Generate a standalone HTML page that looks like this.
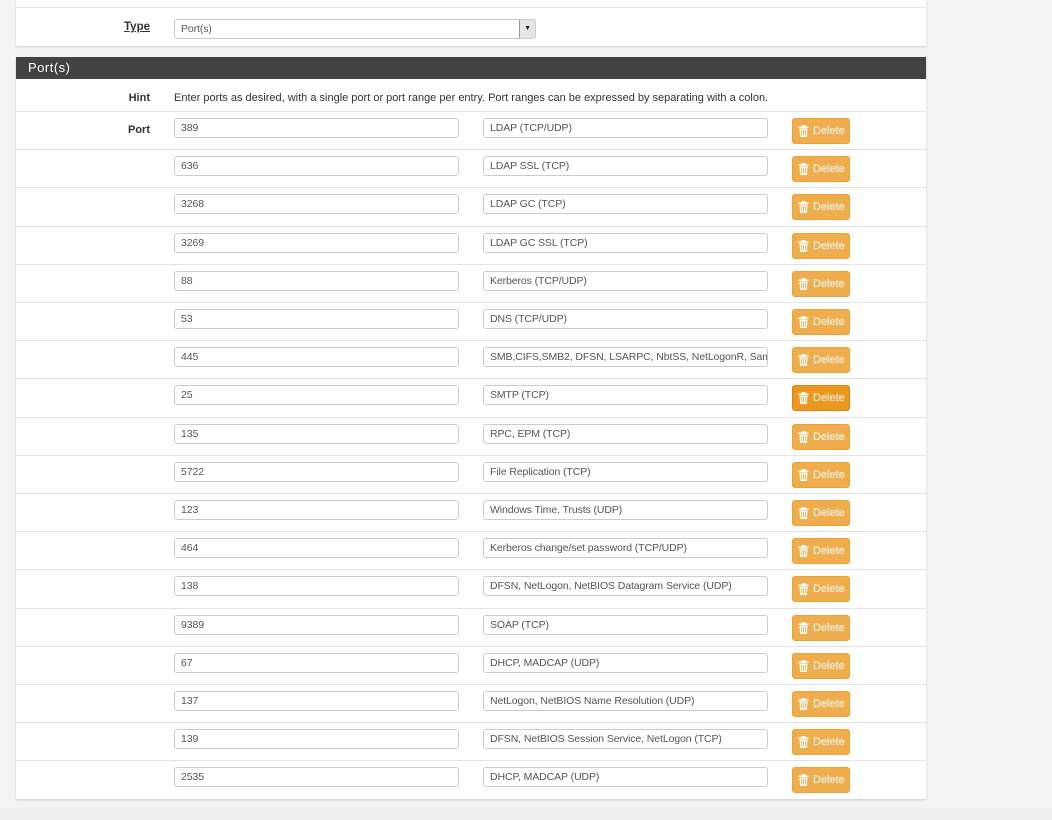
<!DOCTYPE html>
<html><head><style>
body{margin:0;width:1052px;height:820px;background:#f3f3f3;font-family:"Liberation Sans",sans-serif;position:relative;overflow:hidden}
.bot{position:absolute;left:0;top:808px;width:1052px;height:12px;background:#efefef}
.panel{position:absolute;left:16px;width:910px;background:#fff;box-shadow:0 1px 2px rgba(0,0,0,.15)}
.lbl{position:absolute;right:776px;font-size:11px;font-weight:bold;color:#333}
.in{position:absolute;border:1px solid #ccc;border-radius:3px;background:#fff;font-size:10.5px;color:#555;line-height:18px;padding-left:6px;box-sizing:border-box;height:20px;white-space:nowrap;overflow:hidden;letter-spacing:-.1px}
.btn{position:absolute;left:776px;width:58px;height:26px;background:#f0ad4e;border:1px solid #eea236;border-radius:3px;box-sizing:border-box;color:#fff;font-size:11px;line-height:24px}
.btn.a{background:#ec971f;border-color:#d58512}
.btn svg{position:absolute;left:5px;top:6px}
.btn span{position:absolute;left:20px}
.row{position:absolute;left:0;width:910px;border-top:1px solid #e3e3e3;height:38px}
</style></head><body>
<div class="panel" style="top:0;height:46px">
<div style="position:absolute;left:0;top:7px;width:910px;border-top:1px solid #e3e3e3"></div>
<div class="lbl" style="top:21px;text-decoration:underline;font-size:11.5px">Type</div>
<div class="in" style="left:158px;top:19px;width:362px;line-height:18px">Port(s)<div style="position:absolute;right:0;top:0;width:15px;height:18px;background:#e6e6e6;border-left:1px solid #999;font-size:7px;text-align:center;color:#222">▼</div></div>
</div>
<div class="panel" style="top:57px;height:742px">
<div style="height:22px;background:#424242;color:#fff;font-size:13px;line-height:22px;padding-left:12px;letter-spacing:.5px">Port(s)</div>
<div class="lbl" style="top:35px">Hint</div>
<div style="position:absolute;left:158px;top:35px;font-size:11px;color:#333">Enter ports as desired, with a single port or port range per entry. Port ranges can be expressed by separating with a colon.</div>
<div id="rows"></div>
</div>
<div class="bot"></div>
<script>
var d=[["389","LDAP (TCP/UDP)"],["636","LDAP SSL (TCP)"],["3268","LDAP GC (TCP)"],["3269","LDAP GC SSL (TCP)"],["88","Kerberos (TCP/UDP)"],["53","DNS (TCP/UDP)"],["445","SMB,CIFS,SMB2, DFSN, LSARPC, NbtSS, NetLogonR, SamR, SrvSvc"],["25","SMTP (TCP)"],["135","RPC, EPM (TCP)"],["5722","File Replication (TCP)"],["123","Windows Time, Trusts (UDP)"],["464","Kerberos change/set password (TCP/UDP)"],["138","DFSN, NetLogon, NetBIOS Datagram Service (UDP)"],["9389","SOAP (TCP)"],["67","DHCP, MADCAP (UDP)"],["137","NetLogon, NetBIOS Name Resolution (UDP)"],["139","DFSN, NetBIOS Session Service, NetLogon (TCP)"],["2535","DHCP, MADCAP (UDP)"]];
var h="",ic='<svg width="11" height="12" viewBox="0 0 11 12"><rect x="0.5" y="1.5" width="10" height="1.5" fill="#fff"/><rect x="3.5" y="0" width="4" height="2" fill="#fff"/><path d="M1.5 3.5h8l-.6 8.5h-6.8z" fill="#fff"/><path d="M3.7 5v5.5M5.5 5v5.5M7.3 5v5.5" stroke="#f0ad4e" stroke-width=".9"/></svg>';
for(var i=0;i<d.length;i++){var t=54+i*38.2;
h+='<div class="row" style="top:'+t+'px">'+(i==0?'<div class="lbl" style="top:12px">Port</div>':'')+
'<div class="in" style="left:158px;top:6px;width:285px">'+d[i][0]+'</div>'+
'<div class="in" style="left:467px;top:6px;width:285px">'+d[i][1]+'</div>'+
'<div class="btn'+(i==7?' a':'')+'" style="top:6px">'+ic+'<span>Delete</span></div></div>';}
document.getElementById("rows").innerHTML=h;
</script>
</body></html>
